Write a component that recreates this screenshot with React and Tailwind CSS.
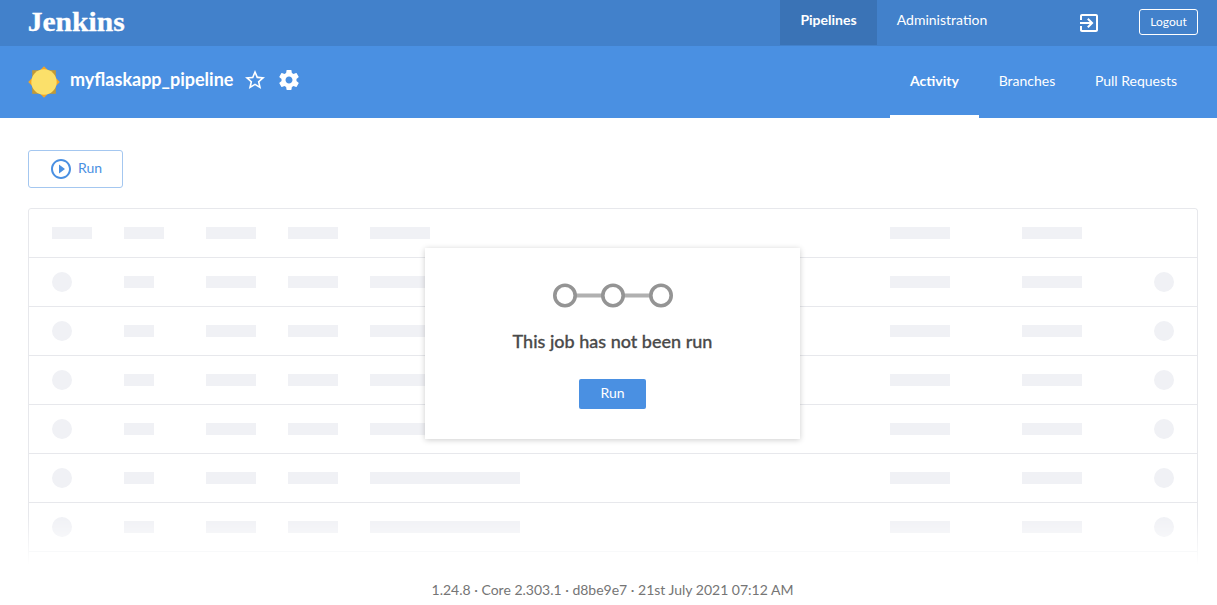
const COLUMNS = "grid grid-cols-[72px_82px_82px_82px_520px_132px_132px_20px] items-center pl-[23px]";

function Logo() {
  return (
    <svg className="h-[30px] w-[110px] shrink-0" viewBox="0 0 110 30" role="img" aria-label="Jenkins">
      <text
        x="-0.3"
        y="24.6"
        fill="#fff"
        stroke="#fff"
        strokeWidth="0.3"
        fontSize="26.5"
        fontWeight="700"
        fontFamily="'Liberation Serif', serif"
        textLength="97"
        lengthAdjust="spacingAndGlyphs"
      >
        Jenkins
      </text>
    </svg>
  );
}

function SunIcon() {
  return (
    <svg className="size-8 shrink-0" viewBox="0 0 32 32">
      <rect x="4.2" y="4.2" width="23.6" height="23.6" fill="#c29a35" />
      <path d="M16 0.2 31.8 16 16 31.8 0.2 16z" fill="#f5a623" />
      <circle cx="16" cy="16" r="12.7" fill="#fbe06a" />
    </svg>
  );
}

function Icon({ d, className }) {
  return (
    <svg className={className} viewBox="0 0 24 24" fill="currentColor">
      <path d={d} />
    </svg>
  );
}

const STAR =
  "M22 9.24l-7.19-.62L12 2 9.19 8.63 2 9.24l5.46 4.73L5.82 21 12 17.27 18.18 21l-1.63-7.03L22 9.24zM12 15.4l-3.76 2.27 1-4.28-3.32-2.88 4.38-.38L12 6.1l1.71 4.04 4.38.38-3.32 2.88 1 4.28L12 15.4z";
const GEAR =
  "M19.43 12.98c.04-.32.07-.64.07-.98s-.03-.66-.07-.98l2.11-1.65c.19-.15.24-.42.12-.64l-2-3.46c-.12-.22-.39-.3-.61-.22l-2.49 1c-.52-.4-1.08-.73-1.69-.98l-.38-2.65C14.46 2.18 14.25 2 14 2h-4c-.25 0-.46.18-.49.42l-.38 2.65c-.61.25-1.17.59-1.69.98l-2.49-1c-.23-.09-.49 0-.61.22l-2 3.46c-.13.22-.07.49.12.64l2.11 1.65c-.04.32-.07.65-.07.98s.03.66.07.98l-2.11 1.65c-.19.15-.24.42-.12.64l2 3.46c.12.22.39.3.61.22l2.49-1c.52.4 1.08.73 1.69.98l.38 2.65c.03.24.24.42.49.42h4c.25 0 .46-.18.49-.42l.38-2.65c.61-.25 1.17-.59 1.69-.98l2.49 1c.23.09.49 0 .61-.22l2-3.46c.12-.22.07-.49-.12-.64l-2.11-1.65zM12 15.5c-1.93 0-3.5-1.57-3.5-3.5s1.57-3.5 3.5-3.5 3.5 1.57 3.5 3.5-1.57 3.5-3.5 3.5z";
const EXIT =
  "M10.09 15.59L11.5 17l5-5-5-5-1.41 1.41L12.67 11H3v2h9.67l-2.58 2.59zM19 3H5c-1.11 0-2 .9-2 2v4h2V5h14v14H5v-4H3v4c0 1.1.89 2 2 2h14c1.1 0 2-.9 2-2V5c0-1.1-.9-2-2-2z";
const PLAY =
  "M10 16.5l6-4.5-6-4.5v9zM12 2C6.48 2 2 6.48 2 12s4.48 10 10 10 10-4.48 10-10S17.52 2 12 2zm0 18c-4.41 0-8-3.59-8-8s3.59-8 8-8 8 3.59 8 8-3.59 8-8 8z";

function Bar({ className }) {
  return <span className={`block h-3 bg-[#f0f1f5] ${className}`} />;
}

function Dot() {
  return <span className="block size-5 rounded-full bg-[#f0f1f5]" />;
}

function PlaceholderTable() {
  return (
    <div className="h-[357px] rounded-t-[3px] border border-b-0 border-[#e7e8ec] mask-[linear-gradient(to_bottom,black_308px,transparent_357px)]">
      <div className={`${COLUMNS} h-[49px] border-b border-[#e7e8ec]`}>
        <Bar className="w-10" />
        <Bar className="w-10" />
        <Bar className="w-[50px]" />
        <Bar className="w-[50px]" />
        <Bar className="w-[60px]" />
        <Bar className="w-[60px]" />
        <Bar className="w-[60px]" />
      </div>
      {[1, 2, 3, 4, 5, 6].map((row) => (
        <div key={row} className={`${COLUMNS} h-[49px] border-b border-[#e7e8ec]`}>
          <Dot />
          <Bar className="w-[30px]" />
          <Bar className="w-[50px]" />
          <Bar className="w-[50px]" />
          <Bar className="w-[150px]" />
          <Bar className="w-[60px]" />
          <Bar className="w-[60px]" />
          <Dot />
        </div>
      ))}
    </div>
  );
}

function EmptyStateDialog() {
  return (
    <div className="absolute top-[40px] left-[397px] flex h-[191px] w-[375px] flex-col items-center bg-white pt-[35px] shadow-[0_1px_6px_rgba(0,0,0,0.2)]">
      <svg className="h-[25px] w-[120px]" viewBox="0 0 120 25">
        <path d="M22 12.5h28M70 12.5h28" stroke="#b0b0b0" strokeWidth="4" />
        <g fill="#fff" stroke="#949494" strokeWidth="3.6">
          <circle cx="12" cy="12.5" r="10.2" />
          <circle cx="60" cy="12.5" r="10.2" />
          <circle cx="108" cy="12.5" r="10.2" />
        </g>
      </svg>
      <h1 className="mt-5 text-lg leading-[26px] font-medium whitespace-nowrap text-[#4a4a4a] [-webkit-text-stroke:0.3px_#4a4a4a]">
        This job has not been run
      </h1>
      <button className="mt-[25px] h-[30px] w-[67px] rounded-[2px] bg-[#4a90e2] pb-[3px] text-sm text-white">Run</button>
    </div>
  );
}

export default function App() {
  return (
    <div className="flex h-[605px] w-[1217px] flex-col overflow-hidden bg-white font-['Lato',sans-serif] text-sm">
      <header className="flex h-[46px] bg-[#4281cb] pr-[19px] pl-7 text-white">
        <div className="flex-1 pt-[6px]">
          <Logo />
        </div>
        <nav className="flex text-center leading-[40px]">
          <a className="h-[45px] w-[97px] bg-[#3a73b6] font-bold">Pipelines</a>
          <a className="h-[45px] w-[130px]">Administration</a>
        </nav>
        <div className="flex w-[191px] items-center justify-end gap-[38px] pb-[2px]">
          <Icon d={EXIT} className="mt-[2px] size-6" />
          <button className="h-[26px] w-[59px] rounded-[3px] border border-white text-xs">Logout</button>
        </div>
      </header>

      <div className="flex h-[72px] justify-between bg-[#4a90e2] pr-5 pl-7 text-white">
        <div className="flex items-center">
          <SunIcon />
          <h1 className="mb-[6px] ml-[10px] text-lg font-bold">myflaskapp_pipeline</h1>
          <Icon d={STAR} className="mb-1 ml-[10px] size-6" />
          <Icon d={GEAR} className="mb-1 ml-[10px] size-6" />
        </div>
        <nav className="flex text-center leading-[70px]">
          <a className="w-[89px] border-b-3 border-white font-bold">Activity</a>
          <a className="w-[96px]">Branches</a>
          <a className="w-[122px]">Pull Requests</a>
        </nav>
      </div>

      <main className="pt-8 pr-[19px] pl-7">
        <button className="flex h-[38px] w-[95px] items-center rounded-[3px] border border-[#a4c7f0] pl-5 text-sm text-[#4a90e2]">
          <Icon d={PLAY} className="size-6" />
          <span className="mb-[3px] ml-[5px]">Run</span>
        </button>
        <section className="relative mt-5">
          <PlaceholderTable />
          <EmptyStateDialog />
        </section>
      </main>

      <footer className="mt-[15px] pl-2 text-center text-sm leading-5 text-[#757575]">
        1.24.8 · Core 2.303.1 · d8be9e7 · 21st July 2021 07:12 AM
      </footer>
    </div>
  );
}
